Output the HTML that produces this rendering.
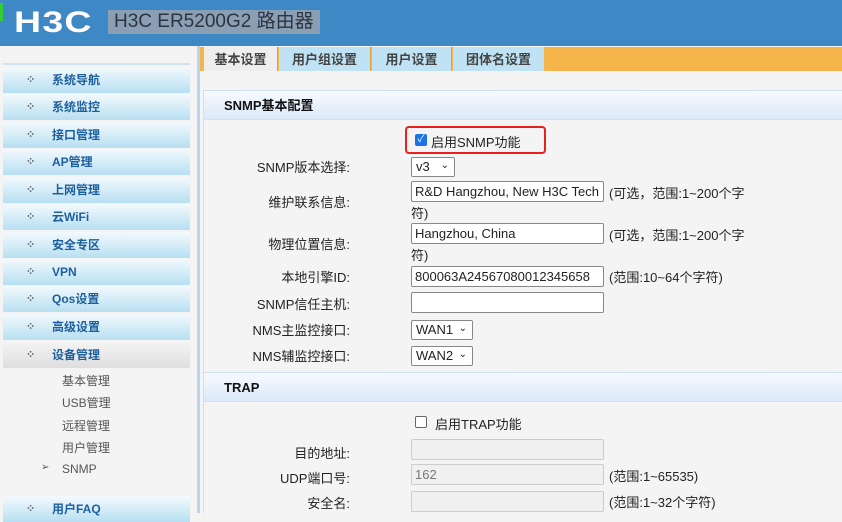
<!DOCTYPE html>
<html><head><meta charset="utf-8"><style>
*{margin:0;padding:0;box-sizing:border-box}
body{width:842px;height:513px;overflow:hidden;background:#f4f4f4;font-family:"Liberation Sans","Noto Sans CJK SC",sans-serif;font-size:13px;color:#222;position:relative}
.a{position:absolute;white-space:nowrap}
#hd{left:0;top:0;width:842px;height:46px;background:#3f88c6}
.logo{left:14px;top:6px;font-size:30px;font-weight:bold;color:#fff;letter-spacing:1px;font-family:"Liberation Sans",sans-serif;transform:scaleX(1.25);transform-origin:left}
.ttl{left:108px;top:10px;height:24px;width:212px;background:#8a9fb3;color:#2c3440;font-size:19px;line-height:24px;padding-left:6px;overflow:hidden}
.si{left:3px;width:187px;height:26px;background:linear-gradient(#f3fafd,#b7dff2);color:#1d5f9e;font-weight:bold;font-size:12px;line-height:26px;padding-left:49px}
.si:before{content:"⁘";position:absolute;left:23px;top:0;color:#666;font-size:11px}
.sub{left:62px;font-size:12px;color:#555}
.tab{top:47px;height:24px;background:#bfe3f4;border-right:1px solid #e2a23c;font-weight:bold;color:#444;font-size:13px;line-height:25px;text-align:center}
.ph{left:204px;width:638px;height:30px;background:linear-gradient(#f6faff,#dbe9f8);border-top:1px solid #cfe0f2;border-bottom:1px solid #cfe0f2;font-weight:bold;font-size:13px;line-height:29px;padding-left:20px;color:#111}
.lb{width:200px;left:150px;text-align:right;font-size:13px}
.in{left:411px;width:193px;height:21px;background:#fff;border:1px solid #888;border-radius:2px;font-size:13px;line-height:19px;padding-left:3px}
.dis{background:#f0f0f0;border-color:#ccc;color:#777}
.sel{left:411px;height:20px;background:#fff;border:1px solid #888;border-radius:2px;font-size:13px;line-height:18px;padding-left:4px}
.sel span{position:absolute;right:5px;top:-1px;font-size:10px}
.nt{left:609px;font-size:13px}
</style></head><body>
<div id="hd" class="a"></div>
<div class="a" style="left:0;top:3px;width:3px;height:18px;background:#3c3"></div>
<div class="a logo">H3C</div>
<div class="a ttl">H3C ER5200G2 路由器</div>
<div class="a" style="left:3px;top:63px;width:187px;height:2px;background:#cfe4f3"></div>
<div class="a" style="left:197px;top:46px;width:3px;height:467px;background:#b9d4ee"></div>
<div class="a si" style="top:67px">系统导航</div>
<div class="a si" style="top:94px">系统监控</div>
<div class="a si" style="top:122px">接口管理</div>
<div class="a si" style="top:149px">AP管理</div>
<div class="a si" style="top:177px">上网管理</div>
<div class="a si" style="top:204px">云WiFi</div>
<div class="a si" style="top:232px">安全专区</div>
<div class="a si" style="top:259px">VPN</div>
<div class="a si" style="top:286px">Qos设置</div>
<div class="a si" style="top:314px">高级设置</div>
<div class="a si" style="top:342px;background:linear-gradient(#f4f4f4,#dedede)">设备管理</div>
<div class="a sub" style="top:372px">基本管理</div>
<div class="a sub" style="top:394px">USB管理</div>
<div class="a sub" style="top:417px">远程管理</div>
<div class="a sub" style="top:439px">用户管理</div>
<div class="a sub" style="top:462px">SNMP</div>
<div class="a" style="left:41px;top:462px;font-size:10px;color:#555">➢</div>
<div class="a si" style="top:496px">用户FAQ</div>
<div class="a" style="left:200px;top:47px;width:642px;height:24px;background:#f6b54b"></div>
<div class="a tab" style="left:204px;width:74px;background:#eeeeee">基本设置</div>
<div class="a tab" style="left:279px;width:92px">用户组设置</div>
<div class="a tab" style="left:372px;width:80px">用户设置</div>
<div class="a tab" style="left:453px;width:91px;border-right:none">团体名设置</div>
<div class="a" style="left:203px;top:90px;width:1px;height:423px;background:#cfe0f2"></div>
<div class="a ph" style="top:90px">SNMP基本配置</div>
<div class="a" style="left:405px;top:126px;width:141px;height:28px;border:2px solid #e82020;border-radius:4px"></div>
<div class="a" style="left:415px;top:134px;width:12px;height:12px;background:#1a73e8;border-radius:2px;color:#fff;font-size:10px;line-height:12px;text-align:center">✓</div>
<div class="a" style="left:431px;top:132px">启用SNMP功能</div>
<div class="a lb" style="top:157px">SNMP版本选择:</div>
<div class="a sel" style="top:157px;width:44px">v3<span>⌄</span></div>
<div class="a lb" style="top:192px">维护联系信息:</div>
<div class="a in" style="top:181px">R&amp;D Hangzhou, New H3C Tech</div>
<div class="a nt" style="top:183px">(可选，范围:1~200个字</div>
<div class="a" style="left:411px;top:203px">符)</div>
<div class="a lb" style="top:234px">物理位置信息:</div>
<div class="a in" style="top:223px">Hangzhou, China</div>
<div class="a nt" style="top:225px">(可选，范围:1~200个字</div>
<div class="a" style="left:411px;top:245px">符)</div>
<div class="a lb" style="top:267px">本地引擎ID:</div>
<div class="a in" style="top:266px">800063A24567080012345658</div>
<div class="a nt" style="top:267px">(范围:10~64个字符)</div>
<div class="a lb" style="top:294px">SNMP信任主机:</div>
<div class="a in" style="top:292px"></div>
<div class="a lb" style="top:320px">NMS主监控接口:</div>
<div class="a sel" style="top:320px;width:62px">WAN1<span>⌄</span></div>
<div class="a lb" style="top:346px">NMS辅监控接口:</div>
<div class="a sel" style="top:346px;width:62px">WAN2<span>⌄</span></div>
<div class="a ph" style="top:372px">TRAP</div>
<div class="a" style="left:415px;top:416px;width:12px;height:12px;border:1px solid #666;border-radius:2px;background:#fff"></div>
<div class="a" style="left:435px;top:414px">启用TRAP功能</div>
<div class="a lb" style="top:443px">目的地址:</div>
<div class="a in dis" style="top:439px"></div>
<div class="a lb" style="top:468px">UDP端口号:</div>
<div class="a in dis" style="top:464px">162</div>
<div class="a nt" style="top:466px">(范围:1~65535)</div>
<div class="a lb" style="top:493px">安全名:</div>
<div class="a in dis" style="top:491px"></div>
<div class="a nt" style="top:492px">(范围:1~32个字符)</div>
</body></html>
